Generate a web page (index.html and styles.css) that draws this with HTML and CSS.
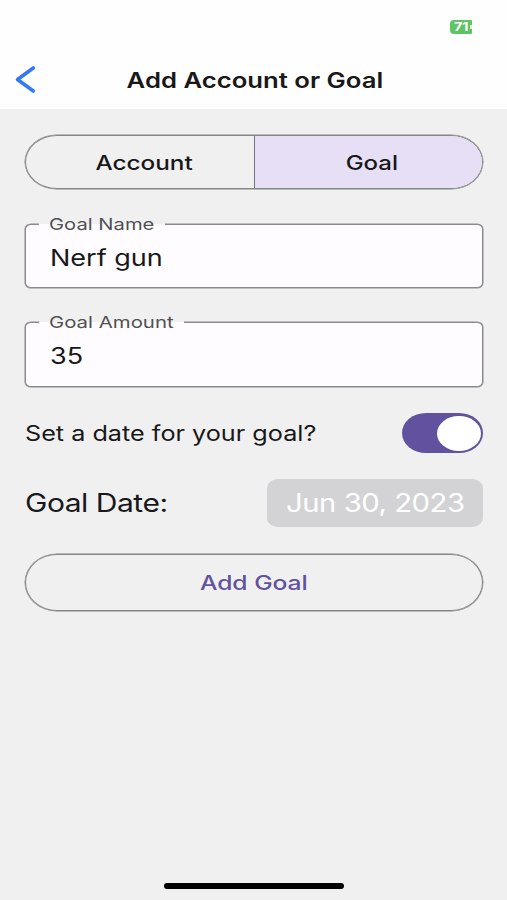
FILE: index.html
```html
<!DOCTYPE html>
<html lang="en">
<head>
<meta charset="utf-8">
<title>Add Account or Goal</title>
<link rel="stylesheet" href="styles.css">
</head>
<body>
<header class="header">
  <div class="status"><div class="battery"><span class="wide left">71</span><i></i></div></div>
  <div class="nav">
    <svg class="back" width="24" height="32" viewBox="0 0 24 32"><path d="M20.300 4 L4.500 15.500 L20.300 27" fill="none" stroke="#3478f6" stroke-width="3.600" stroke-linecap="round" stroke-linejoin="round"/></svg>
    <h1 class="title"><span class="wide t-title">Add Account or Goal</span></h1>
  </div>
</header>
<main class="content">
  <div class="segments">
    <div class="segment"><span class="wide t-account">Account</span></div>
    <div class="segment selected"><span class="wide t-goal">Goal</span></div>
  </div>
  <div class="field first">
    <div class="label label-name"><span class="wide left t-name">Goal Name</span></div>
    <span class="wide left value">Nerf gun</span>
  </div>
  <div class="field second">
    <div class="label label-amount"><span class="wide left t-amount">Goal Amount</span></div>
    <span class="wide left value">35</span>
  </div>
  <div class="toggle-row">
    <span class="wide left t-set">Set a date for your goal?</span>
    <div class="switch"><div class="thumb"></div></div>
  </div>
  <div class="date-row">
    <span class="wide left t-date">Goal Date:</span>
    <div class="date"><span class="wide t-jun">Jun 30, 2023</span></div>
  </div>
  <div class="button"><span class="wide t-add">Add Goal</span></div>
</main>
<div class="home"></div>
</body>
</html>
```
FILE: styles.css
```css
* { box-sizing: border-box; }
body {
  margin: 0;
  width: 507px;
  height: 900px;
  display: flex;
  flex-direction: column;
  overflow: hidden;
  background: #f0f0f0;
  color: #18181a;
  font-family: Inter, "Liberation Sans", sans-serif;
}
.wide { display: inline-block; white-space: nowrap; line-height: 1; transform: scaleX(1.2); }
.wide.left { transform-origin: left center; }
.wide.t-title { transform: scaleX(1.223); }
.header { height: 109px; background: #fefefe; }
.status { height: 50px; display: flex; justify-content: flex-end; padding: 20px 35px 0 0; }
.battery {
  width: 22px; height: 14px; border-radius: 4px 1px 1px 4px;
  background: #5fc466; color: #fff; display: flex; align-items: center;
  font-size: 12px; font-weight: 700; line-height: 14px; padding-left: 4px;
}
.battery span { width: 15px; }
.battery i { width: 2px; height: 4px; background: #fff; border-radius: 1px; margin-left: 1px; }
.nav { height: 59px; display: grid; grid-template-columns: 40px 1fr 38px; align-items: center; }
.back { margin-left: 13px; }
.title { margin: 0; padding-top: 2px; font-size: 21px; font-weight: 600; text-align: center; line-height: 1; }
.content { flex: 1; padding: 26px 24px 0 25px; }
.segments {
  height: 54px; display: grid; grid-template-columns: 228px 1fr;
  border: 1px solid #858585; box-shadow: 0 0 0 0.500px #858585;
  border-radius: 32px / 27px; overflow: hidden;
}
.segment { display: flex; align-items: center; justify-content: center; font-size: 20px; font-weight: 550; padding: 1px 0 0 9px; }
.selected { background: #e6dff5; border-left: 1px solid #77717f; padding-left: 7px; }
.wide.t-account { transform: scaleX(1.215); }
.field {
  position: relative; height: 65px; margin-top: 35px; padding: 22px 0 0 24px;
  border: 1px solid #8c8a8e; box-shadow: 0 0 0 0.500px #8c8a8e;
  border-radius: 6px / 5px; background: #fefcfe;
}
.first { height: 64px; }
.second { margin-top: 34px; }
.label {
  position: absolute; top: -9px; left: 13px; height: 16px; padding-left: 9.500px;
  background: linear-gradient(#f0f0f0 8px, #fefcfe 8px); font-size: 16.500px; line-height: 16px; color: #505055;
}
.label-name { width: 126px; }
.label-amount { width: 145px; }
.wide.t-name { transform: scaleX(1.225); }
.wide.t-amount { transform: scaleX(1.235); }
.value { font-size: 22.500px; }
.toggle-row, .date-row { display: flex; align-items: center; justify-content: space-between; }
.toggle-row { height: 40px; margin-top: 26px; }
.t-set { font-size: 21px; }
.switch { width: 81px; height: 40px; padding: 2.500px 2px 2.500px 35px; border-radius: 24px / 20px; background: #62519f; }
.thumb { width: 44px; height: 35px; border-radius: 50%; background: #fff; }
.date-row { height: 48px; margin-top: 26px; font-size: 25px; letter-spacing: -0.400px; }
.t-date, .t-jun { margin-top: 1px; }
.date {
  width: 216px; height: 48px; border-radius: 11px / 9px; background: #d3d3d5;
  color: #fff; display: flex; align-items: center; justify-content: center;
}
.wide.t-jun { transform: scaleX(1.17); }
.button {
  height: 57px; margin-top: 27px; border: 1px solid #858585; box-shadow: 0 0 0 0.500px #858585;
  border-radius: 32px / 28.500px; display: flex; align-items: center; justify-content: center;
  color: #62519f; font-size: 20px; font-weight: 550;
}
.wide.t-add { transform: scaleX(1.23); }
.home { width: 180px; height: 6px; margin: 0 auto 11px 164px; border-radius: 3px; background: #000; }
```
